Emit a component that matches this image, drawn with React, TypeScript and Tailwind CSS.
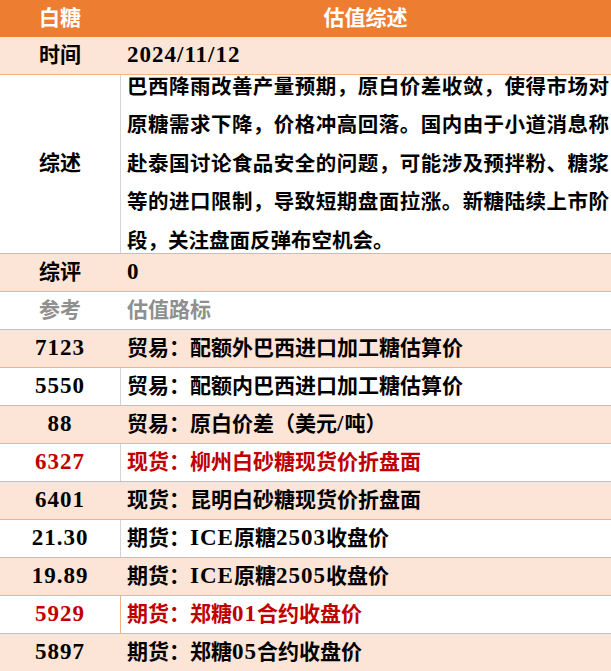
const font = { fontFamily: '"Liberation Serif", "Noto Sans CJK SC", serif' };

// wrap latin/digit runs so they get the larger, wider glyphs seen in the picture
const Txt = ({ s }: { s: string }) => (
  <>
    {s.split(/([\x20-\x7e]+)/).map((part, i) =>
      /[\x20-\x7e]/.test(part) ? (
        <span key={i} className="text-[23px] tracking-[1px]">
          {part}
        </span>
      ) : (
        <span key={i}>{part}</span>
      )
    )}
  </>
);

const rows = [
  { v: "7123", t: "贸易：配额外巴西进口加工糖估算价", peach: true },
  { v: "5550", t: "贸易：配额内巴西进口加工糖估算价", peach: false },
  { v: "88", t: "贸易：原白价差（美元/吨）", peach: true },
  { v: "6327", t: "现货：柳州白砂糖现货价折盘面", peach: false, red: true },
  { v: "6401", t: "现货：昆明白砂糖现货价折盘面", peach: true },
  { v: "21.30", t: "期货：ICE原糖2503收盘价", peach: false },
  { v: "19.89", t: "期货：ICE原糖2505收盘价", peach: true },
  { v: "5929", t: "期货：郑糖01合约收盘价", peach: false, red: true, orangeLine: true },
  { v: "5897", t: "期货：郑糖05合约收盘价", peach: true },
];

const summary = [
  "巴西降雨改善产量预期，原白价差收敛，使得市场对",
  "原糖需求下降，价格冲高回落。国内由于小道消息称",
  "赴泰国讨论食品安全的问题，可能涉及预拌粉、糖浆",
  "等的进口限制，导致短期盘面拉涨。新糖陆续上市阶",
];

export default function App() {
  return (
    <div className="w-[611px] h-[671px] overflow-hidden bg-white text-[21px] font-bold text-black whitespace-nowrap" style={font}>
      {/* header */}
      <div className="flex h-[37px] bg-[#ed7d31] text-white items-center">
        <div className="w-[120px] text-center">白糖</div>
        <div className="flex-1 text-center">估值综述</div>
      </div>

      <div className="flex h-[38px] bg-[#fce4d6] border-b border-[#f4b183] items-center">
        <div className="w-[120px] text-center">时间</div>
        <div className="flex-1 pl-[7px]">
          <Txt s="2024/11/12" />
        </div>
      </div>

      <div className="flex h-[179px] border-b border-[#f4b183]">
        <div className="w-[120px] flex items-center justify-center">综述</div>
        <div className="flex-1 min-w-0 border-l border-[#d4d4d4] pl-[6px] pr-[2px] flex flex-col justify-center">
          <div className="leading-[38.5px] text-[20.5px]">
            {summary.map((line) => (
              <div key={line} className="text-justify [text-align-last:justify]">
                {line}
              </div>
            ))}
            <div>段，关注盘面反弹布空机会。</div>
          </div>
        </div>
      </div>

      <div className="flex h-[38px] bg-[#fce4d6] border-b border-[#f4b183] items-center">
        <div className="w-[120px] text-center">综评</div>
        <div className="flex-1 pl-[7px]">
          <Txt s="0" />
        </div>
      </div>

      <div className="flex h-[38px] border-b border-[#f4b183] items-center text-[#8f8f8f]">
        <div className="w-[120px] text-center">参考</div>
        <div className="flex-1 pl-[7px]">估值路标</div>
      </div>

      {rows.map((r) => (
        <div
          key={r.v}
          className={`flex h-[38px] border-b border-[#f4b183] ${r.peach ? "bg-[#fce4d6]" : "bg-white"} ${r.red ? "text-[#c00000]" : ""}`}
        >
          <div className="w-[120px] flex items-center justify-center">
            <Txt s={r.v} />
          </div>
          <div
            className={`flex-1 flex items-center pl-[6px] border-l ${
              r.peach ? "border-transparent" : r.orangeLine ? "border-[#f4b183]" : "border-[#d4d4d4]"
            }`}
          >
            <Txt s={r.t} />
          </div>
        </div>
      ))}
    </div>
  );
}
